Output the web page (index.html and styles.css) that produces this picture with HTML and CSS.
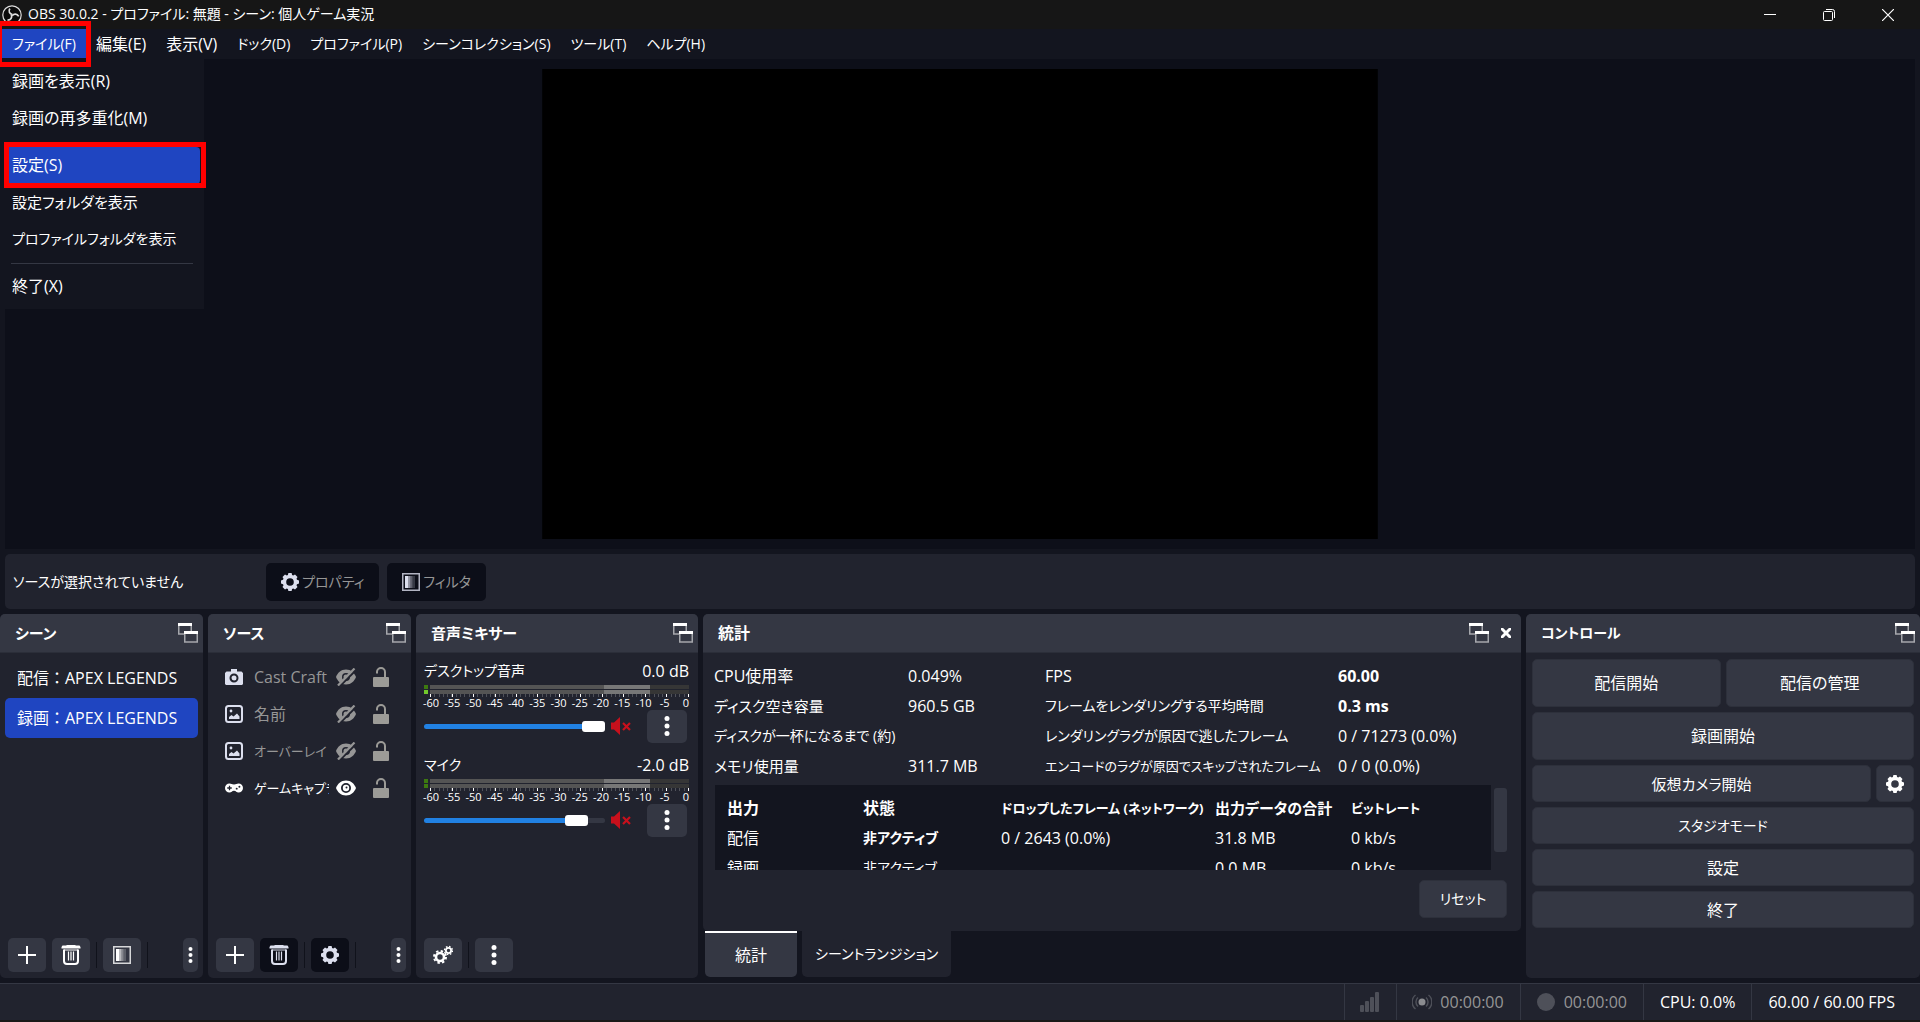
FILE: index.html
```html
<!DOCTYPE html>
<html lang="ja">
<head>
<meta charset="utf-8">
<title>OBS 30.0.2 - プロファイル: 無題 - シーン: 個人ゲーム実況</title>
<link rel="stylesheet" href="styles.css">
</head>
<body>
<svg class="sprite" aria-hidden="true">
  <symbol id="gear" viewBox="0 0 18 18"><path fill="currentColor" fill-rule="evenodd" d="M7.4 0h3.2l.5 1.9 1.1.5 1.8-1 2.5 2.5-1 1.8.5 1.1 2 .6v3.2l-2 .6-.5 1.1 1 1.8-2.5 2.5-1.8-1-1.1.5-.5 1.9H7.4l-.5-1.9-1.1-.5-1.8 1-2.5-2.5 1-1.8-.5-1.1-2-.6V7.400l2-.6.5-1.1-1-1.800 2.500-2.500 1.800 1 1.100-.5zM9 5.200a3.800 3.800 0 1 0 0 7.600 3.800 3.800 0 0 0 0-7.600z"/></symbol>
  <symbol id="gears" viewBox="0 0 20 18"><g fill="none" stroke="currentColor"><circle cx="7" cy="11" r="4" stroke-width="2.600"/><circle cx="7" cy="11" r="6" stroke-width="2" stroke-dasharray="2.400 2.312"/><circle cx="15.500" cy="4.500" r="2.600" stroke-width="1.800"/><circle cx="15.500" cy="4.500" r="4" stroke-width="1.400" stroke-dasharray="1.600 1.542"/></g></symbol>
  <symbol id="filter" viewBox="0 0 18 18"><path fill="none" stroke="currentColor" stroke-width="1.500" opacity=".8" d="M.75.75h16.500v16.500H.75z"/><path fill="currentColor" d="M3 3h3.500v12H3z"/><path fill="currentColor" opacity=".65" d="M6.500 3h2v12h-2z"/><path fill="currentColor" opacity=".4" d="M8.500 3h2v12h-2z"/><path fill="currentColor" opacity=".2" d="M10.500 3h2.500v12h-2.500z"/></symbol>
  <symbol id="popout" viewBox="0 0 20 20"><path fill="none" stroke="#a5a7ac" stroke-width="1.500" d="M7 11H.75V1.500h12.500V8M6.750 9h12.500v10H6.750z"/><path fill="#fff" d="M0 0h14v3H0zM6 8h14v3H6z"/></symbol>
  <symbol id="plus" viewBox="0 0 18 18"><path stroke="currentColor" stroke-width="2" d="M9 0v18M0 9h18"/></symbol>
  <symbol id="trash" viewBox="0 0 20 20"><path fill="currentColor" d="M5 .5 6 0h8l1 .5h3.500L19.500 2v1.500H.5V2l1-1.500z"/><path fill="none" stroke="currentColor" stroke-width="2" d="M3 4.500V16a3 3 0 0 0 3 3h8a3 3 0 0 0 3-3V4.500"/><path stroke="currentColor" stroke-width="1.200" d="M3 5h14M7.500 6.500v9M10 6.500v9M12.500 6.500v9"/></symbol>
  <symbol id="dots" viewBox="0 0 6 20"><g fill="currentColor"><circle cx="3" cy="2.500" r="2.500"/><circle cx="3" cy="10" r="2.500"/><circle cx="3" cy="17.500" r="2.500"/></g></symbol>
  <symbol id="camera" viewBox="0 0 18 16"><path fill="currentColor" fill-rule="evenodd" d="M6 0h6v2.500h4.500L18 4v11l-1 1H1l-1-1V4l1.500-1.500H6zM9 4.500a4.500 4.500 0 1 0 0 9 4.500 4.500 0 0 0 0-9zm0 2a2.500 2.500 0 1 1 0 5 2.500 2.500 0 0 1 0-5z"/></symbol>
  <symbol id="image" viewBox="0 0 18 18"><rect x="1" y="1" width="16" height="16" rx="2.500" fill="none" stroke="currentColor" stroke-width="2"/><path fill="currentColor" d="M4 14v-2l2.500-2 2 1.500L12 8.500l2.500 3V14z"/><circle cx="6" cy="6" r="1.400" fill="currentColor"/></symbol>
  <symbol id="pad" viewBox="0 0 20 10"><path fill="currentColor" fill-rule="evenodd" d="M5 0c2 0 2.500 1 5 1s3-1 5-1a5 5 0 0 1 0 10c-2.500 0-2.500-2-5-2s-2.500 2-5 2A5 5 0 0 1 5 0zM4.300 2.500v1.800H2.500v1.400h1.800v1.800h1.400V5.700h1.800V4.300H5.700V2.500zM13 4.600a1.100 1.100 0 1 0 0 2.200 1.100 1.100 0 0 0 0-2.200zm3-2.100a1.100 1.100 0 1 0 0 2.200 1.100 1.100 0 0 0 0-2.200z"/></symbol>
  <symbol id="eye" viewBox="0 0 20 16"><path fill="currentColor" fill-rule="evenodd" d="M10 .5C15 .5 18.500 4 20 8c-1.500 4-5 7.500-10 7.500S1.500 12 0 8C1.500 4 5 .5 10 .5zM10 3a5 5 0 1 0 0 10 5 5 0 0 0 0-10z"/><circle cx="10" cy="8" r="3.200" fill="currentColor"/><circle cx="10.500" cy="7.500" r="1" fill="#21232e"/></symbol>
  <symbol id="eye-off" viewBox="0 0 20 18"><path fill="currentColor" fill-rule="evenodd" d="M10 1.500C15 1.500 18.500 5 20 9c-1.500 4-5 7.500-10 7.500S1.500 13 0 9c1.500-4 5-7.500 10-7.500zM10 5a4 4 0 1 0 0 8 4 4 0 0 0 0-8z"/><circle cx="10" cy="9" r="2.500" fill="currentColor"/><path stroke="#21232e" stroke-width="2" d="M3.500 18.500 20 2"/><path stroke="currentColor" stroke-width="2.200" d="M2 17.500 18.500.5"/></symbol>
  <symbol id="lock" viewBox="0 0 16 20"><rect y="10" width="16" height="10" rx="1" fill="currentColor"/><path fill="none" stroke="currentColor" stroke-width="2" d="M12 10V5a4 4 0 0 0-8 0v1.500"/></symbol>
  <symbol id="mute" viewBox="0 0 20 18"><path fill="currentColor" d="M0 5.500h3L9 0v18l-6-5.500H0z"/><path stroke="currentColor" stroke-width="2.200" d="m12 6 7 7M19 6l-7 7"/></symbol>
</svg>

<header class="titlebar">
  <svg class="logo" viewBox="0 0 20 20" fill="none" stroke="#ddd"><circle cx="10" cy="10" r="9.200" fill="#0a0a0a" stroke-width="1.200"/><g stroke-width="1.700"><path d="M10.500 9.500C7.500 9 6.200 6.500 7.800 3.500"/><path d="M10.500 9.500C7.500 9 6.200 6.500 7.800 3.500" transform="rotate(120 10 10)"/><path d="M10.500 9.500C7.500 9 6.200 6.500 7.800 3.500" transform="rotate(240 10 10)"/></g></svg>
  <h1 class="title">OBS 30.0.2 - プロファイル: 無題 - シーン: 個人ゲーム実況</h1>
  <div class="window-buttons">
    <button aria-label="最小化"><svg width="12" height="12"><path stroke="#fff" d="M0 5.500h12"/></svg></button>
    <button aria-label="元に戻す"><svg width="12" height="12" fill="none" stroke="#fff"><rect x=".5" y="2.500" width="9" height="9" rx="1"/><path d="M3 .5h6.500a2 2 0 0 1 2 2V9"/></svg></button>
    <button aria-label="閉じる"><svg width="12" height="12"><path stroke="#fff" stroke-width="1.200" d="m0 0 12 12M12 0 0 12"/></svg></button>
  </div>
</header>

<nav class="menubar">
  <div class="menu-root">
    <button class="menu kana open">ファイル(F)</button>
    <div class="popup">
      <button>録画を表示(R)</button>
      <button>録画の再多重化(M)</button>
      <hr>
      <button class="current">設定(S)</button>
      <button class="mixed">設定フォルダを表示</button>
      <button class="kana">プロファイルフォルダを表示</button>
      <hr>
      <button>終了(X)</button>
    </div>
  </div>
  <button class="menu">編集(E)</button>
  <button class="menu">表示(V)</button>
  <button class="menu kana">ドック(D)</button>
  <button class="menu kana">プロファイル(P)</button>
  <button class="menu kana">シーンコレクション(S)</button>
  <button class="menu kana">ツール(T)</button>
  <button class="menu kana">ヘルプ(H)</button>
</nav>

<main class="workspace">
  <section class="preview">
    <svg class="output" viewBox="0 0 1920 1080" role="img" aria-label="プレビュー"><rect width="1920" height="1080" fill="#000"/></svg>
  </section>

  <section class="context">
    <span class="context-label kana">ソースが選択されていません</span>
    <button class="off kana" disabled><svg class="i18"><use href="#gear"/></svg>プロパティ</button>
    <button class="off kana" disabled><svg class="i18"><use href="#filter"/></svg>フィルタ</button>
  </section>

  <div class="docks">
    <section class="dock">
      <h2 class="mixed">シーン<button class="plain" aria-label="切り離す"><svg class="i20"><use href="#popout"/></svg></button></h2>
      <ul class="scenes">
        <li>配信：APEX LEGENDS</li>
        <li class="selected">録画：APEX LEGENDS</li>
      </ul>
      <div class="tools">
        <button class="tool" aria-label="追加"><svg class="i18"><use href="#plus"/></svg></button>
        <button class="tool" aria-label="削除"><svg class="i20"><use href="#trash"/></svg></button>
        <i></i>
        <button class="tool" aria-label="フィルタ"><svg class="i18"><use href="#filter"/></svg></button>
        <i></i>
        <button class="tool slim" aria-label="その他"><svg class="dots-s"><use href="#dots"/></svg></button>
      </div>
    </section>

    <section class="dock">
      <h2 class="mixed">ソース<button class="plain" aria-label="切り離す"><svg class="i20"><use href="#popout"/></svg></button></h2>
      <ul class="sources">
        <li class="hidden"><svg class="kind"><use href="#camera"/></svg><span>Cast Craft</span><svg class="eye"><use href="#eye-off"/></svg><svg class="lock"><use href="#lock"/></svg></li>
        <li class="hidden"><svg class="kind"><use href="#image"/></svg><span>名前</span><svg class="eye"><use href="#eye-off"/></svg><svg class="lock"><use href="#lock"/></svg></li>
        <li class="hidden"><svg class="kind"><use href="#image"/></svg><span class="dense">オーバーレイ</span><svg class="eye"><use href="#eye-off"/></svg><svg class="lock"><use href="#lock"/></svg></li>
        <li><svg class="kind"><use href="#pad"/></svg><span class="dense">ゲームキャプチャ</span><svg class="eye"><use href="#eye"/></svg><svg class="lock"><use href="#lock"/></svg></li>
      </ul>
      <div class="tools">
        <button class="tool" aria-label="追加"><svg class="i18"><use href="#plus"/></svg></button>
        <button class="tool off" disabled aria-label="削除"><svg class="i20"><use href="#trash"/></svg></button>
        <i></i>
        <button class="tool off" disabled aria-label="プロパティ"><svg class="i18"><use href="#gear"/></svg></button>
        <i></i>
        <button class="tool slim" aria-label="その他"><svg class="dots-s"><use href="#dots"/></svg></button>
      </div>
    </section>

    <section class="dock">
      <h2 class="mixed">音声ミキサー<button class="plain" aria-label="切り離す"><svg class="i20"><use href="#popout"/></svg></button></h2>
      <div class="mixer">
        <div class="channel">
          <div class="channel-head"><label class="kana" for="desk">デスクトップ音声</label><span>0.0 dB</span></div>
          <div class="meter"><b></b><div></div><b class="lit"></b><div></div></div>
          <div class="ticks"></div>
          <div class="scale"><span>-60</span><span>-55</span><span>-50</span><span>-45</span><span>-40</span><span>-35</span><span>-30</span><span>-25</span><span>-20</span><span>-15</span><span>-10</span><span>-5</span><span>0</span></div>
          <div class="volume"><input id="desk" type="range" min="0" max="100" value="100" style="--level:100%"><button class="plain" aria-label="ミュート"><svg class="mute"><use href="#mute"/></svg></button><button class="tool" aria-label="その他"><svg class="dots-l"><use href="#dots"/></svg></button></div>
        </div>
        <div class="channel">
          <div class="channel-head"><label class="kana" for="mic">マイク</label><span>-2.0 dB</span></div>
          <div class="meter"><b></b><div></div><b></b><div></div></div>
          <div class="ticks"></div>
          <div class="scale"><span>-60</span><span>-55</span><span>-50</span><span>-45</span><span>-40</span><span>-35</span><span>-30</span><span>-25</span><span>-20</span><span>-15</span><span>-10</span><span>-5</span><span>0</span></div>
          <div class="volume"><input id="mic" type="range" min="0" max="100" value="89" style="--level:85%"><button class="plain" aria-label="ミュート"><svg class="mute"><use href="#mute"/></svg></button><button class="tool" aria-label="その他"><svg class="dots-l"><use href="#dots"/></svg></button></div>
        </div>
      </div>
      <div class="tools">
        <button class="tool" aria-label="オーディオの詳細プロパティ"><svg class="i20"><use href="#gears"/></svg></button>
        <i></i>
        <button class="tool" aria-label="その他"><svg class="dots-l"><use href="#dots"/></svg></button>
      </div>
    </section>

    <div class="tabbed">
      <section class="dock">
        <h2>統計<button class="plain" aria-label="切り離す"><svg class="i20"><use href="#popout"/></svg></button><button class="plain close" aria-label="閉じる"><svg width="10" height="10"><path stroke="#fff" stroke-width="3" d="m0 0 10 10M10 0 0 10"/></svg></button></h2>
        <div class="stats">
          <dl>
            <dt>CPU使用率</dt><dd>0.049%</dd><dt>FPS</dt><dd><b>60.00</b></dd>
            <dt class="mixed">ディスク空き容量</dt><dd>960.5 GB</dd><dt class="kana">フレームをレンダリングする平均時間</dt><dd><b>0.3 ms</b></dd>
            <dt class="kana">ディスクが一杯になるまで (約)</dt><dd></dd><dt class="kana">レンダリングラグが原因で逃したフレーム</dt><dd>0 / 71273 (0.0%)</dd>
            <dt class="mixed">メモリ使用量</dt><dd>311.7 MB</dd><dt class="dense">エンコードのラグが原因でスキップされたフレーム</dt><dd>0 / 0 (0.0%)</dd>
          </dl>
          <div class="outputs">
            <div class="outputs-view">
              <table>
                <colgroup><col class="c1"><col class="c2"><col class="c3"><col class="c4"><col></colgroup>
                <thead><tr><th>出力</th><th>状態</th><th class="dense">ドロップしたフレーム (ネットワーク)</th><th class="mixed">出力データの合計</th><th class="dense">ビットレート</th></tr></thead>
                <tbody>
                  <tr><td>配信</td><td class="kana"><b>非アクティブ</b></td><td>0 / 2643 (0.0%)</td><td>31.8 MB</td><td>0 kb/s</td></tr>
                  <tr><td>録画</td><td class="kana">非アクティブ</td><td></td><td>0.0 MB</td><td>0 kb/s</td></tr>
                </tbody>
              </table>
            </div>
            <div class="scroll"></div>
          </div>
          <button class="push kana reset">リセット</button>
        </div>
      </section>
      <div class="tabs">
        <button class="tab active">統計</button>
        <button class="tab kana">シーントランジション</button>
      </div>
    </div>

    <section class="dock">
      <h2 class="kana">コントロール<button class="plain" aria-label="切り離す"><svg class="i20"><use href="#popout"/></svg></button></h2>
      <div class="controls">
        <div class="pair"><button class="push tall">配信開始</button><button class="push tall">配信の管理</button></div>
        <button class="push tall">録画開始</button>
        <div class="pair"><button class="push mixed">仮想カメラ開始</button><button class="push square" aria-label="仮想カメラの設定"><svg class="i18"><use href="#gear"/></svg></button></div>
        <button class="push kana">スタジオモード</button>
        <button class="push">設定</button>
        <button class="push">終了</button>
      </div>
    </section>
  </div>
</main>

<footer class="status">
  <div class="signal"><svg width="20" height="20" fill="#4e5059"><rect y="13" width="4" height="7" rx="1"/><rect x="5" y="9" width="4" height="11" rx="1"/><rect x="10" y="5" width="4" height="15" rx="1"/><rect x="15" width="4" height="20" rx="1"/></svg></div>
  <div class="dim"><svg width="20" height="20" fill="none" stroke="#4e5059" stroke-width="1.500"><circle cx="10" cy="10" r="3.500" fill="#8b8c90" stroke="none"/><path d="M6 5.500a6 6 0 0 0 0 9M14 5.500a6 6 0 0 1 0 9M3.500 3a9 9 0 0 0 0 14M16.500 3a9 9 0 0 1 0 14"/></svg>00:00:00</div>
  <div class="dim"><svg width="20" height="20"><circle cx="10" cy="10" r="9" fill="#4e5059"/></svg>00:00:00</div>
  <div>CPU: 0.0%</div>
  <div class="fps">60.00 / 60.00 FPS</div>
</footer>
</body>
</html>
```
FILE: styles.css
```css
:root {
  --window: #13151f;
  --panel: #21232e;
  --raised: #343743;
  --sunken: #0c0e18;
  --accent: #1f45c1;
  --callout: #ff0000;
  --muted: #969696;
}

* { box-sizing: border-box; }

body {
  margin: 0;
  min-height: 100vh;
  display: flex;
  flex-direction: column;
  background: var(--window);
  color: #fff;
  font: 16px/24px "Open Sans", "Noto Sans CJK JP", sans-serif;
  font-feature-settings: "palt";
  white-space: nowrap;
}

button {
  font: inherit;
  font-feature-settings: inherit;
  color: inherit;
  border: 0;
  padding: 0;
  background: none;
}

h1, h2, ul, dl, dd { margin: 0; padding: 0; }
h2 { font-size: 16px; font-weight: 700; }
ul { list-style: none; }
svg { display: block; flex: none; }

.mixed { font-size: 15px; }
.kana { font-size: 14px; }
.dense { font-size: 13px; }

.sprite { position: absolute; width: 0; height: 0; }
.i18 { width: 18px; height: 18px; }
.i20 { width: 20px; height: 20px; }
.dots-s { width: 5px; height: 16px; }
.dots-l { width: 6px; height: 20px; }

/* Title bar */
.titlebar {
  display: flex;
  align-items: center;
  height: 29px;
  padding: 0 3px 0 2px;
  background: #161616;
}
.logo { width: 20px; height: 20px; }
.title { margin-left: 6px; padding-bottom: 2px; font-size: 14px; font-weight: 400; }
.window-buttons { display: flex; margin-left: auto; }
.window-buttons button { width: 59px; height: 29px; display: grid; place-items: center; }

/* Menu bar */
.menubar { display: flex; height: 30px; padding-left: 2px; }
.menu-root { position: relative; }
.menu { height: 29px; padding: 0 10px; }
.menu.open { background: var(--accent); }
.menu.open::after {
  content: "";
  position: absolute;
  z-index: 3;
  inset: -8px -5px -8px -5px;
  border: 5px solid var(--callout);
}
.popup {
  position: absolute;
  z-index: 2;
  top: 30px;
  left: -2px;
  width: 204px;
  padding: 4px;
  display: flex;
  flex-direction: column;
  background: var(--window);
}
.popup button { height: 37px; padding: 0 0 2px 8px; text-align: left; }
.popup hr { width: 182px; height: 1px; margin: 5px 7px 4px; border: 0; background: var(--raised); }
.popup .current { position: relative; background: var(--accent); border-radius: 4px; }
.popup .current::after {
  content: "";
  position: absolute;
  inset: -5px -6px -4px 0;
  border: 5px solid var(--callout);
}

/* Preview and context bar */
.workspace { flex: 1; display: flex; flex-direction: column; }
.preview {
  flex: 1 1 0;
  min-height: 200px;
  margin: 0 5px;
  padding: 10px;
  display: flex;
  background: #0d0f19;
}
.output { flex: 1; min-width: 0; min-height: 0; }
.context {
  display: flex;
  align-items: center;
  gap: 8px;
  height: 55px;
  margin: 5px;
  padding-left: 8px;
  border-radius: 5px;
  background: var(--panel);
}
.context-label { width: 245px; }
.off { background: var(--sunken); color: #dcdfee; }
.context .off {
  display: flex;
  align-items: center;
  gap: 3px;
  height: 38px;
  padding: 0 15px;
  border-radius: 5px;
  color: var(--muted);
}
.off svg { color: #dcdfee; }

/* Docks */
.docks {
  display: grid;
  grid-template-columns: 203fr 203fr 282fr 818fr 394fr;
  gap: 5px;
  height: 364px;
}
.dock {
  min-width: 0;
  display: flex;
  flex-direction: column;
  border-radius: 5px;
  background: var(--panel);
  overflow: hidden;
}
.dock h2 {
  display: flex;
  align-items: center;
  height: 39px;
  padding: 0 5px 0 15px;
  border-bottom: 1px solid #2b2e39;
  background: var(--raised);
}
h2.mixed { font-size: 15px; }
h2.kana { font-size: 14px; }
.dock h2 .plain { margin-left: auto; }
.dock h2 .close { margin: 0 5px 0 12px; }

.scenes { padding: 5px; font-feature-settings: normal; }
.scenes li { height: 40px; padding: 8px 12px; border-radius: 5px; }
.scenes .selected { background: var(--accent); }

.sources { padding: 5px 22px 0 17px; }
.sources li { display: flex; align-items: center; height: 37px; }
.sources .hidden { color: var(--muted); }
.sources span { flex: 1; min-width: 0; margin: 0 7px 0 11px; overflow: hidden; }
.kind { width: 18px; height: 18px; color: #fff; }
.hidden .kind { color: #dcdfee; }
.eye { width: 20px; height: 18px; }
.lock { width: 16px; height: 20px; margin-left: 17px; color: #9c9b97; }

.tools { display: flex; align-items: center; gap: 6px; margin: auto 5px 6px 8px; }
.tools i { width: 1px; height: 26px; background: #10121b; }
.tool {
  width: 38px;
  height: 34px;
  display: grid;
  place-items: center;
  border-radius: 5px;
  background: var(--raised);
}
.tool.off { background: var(--sunken); }
.tool.slim { width: 15px; margin-left: auto; }

/* Audio mixer */
.mixer { padding: 6px 9px 0 8px; }
.channel { height: 94px; }
.channel-head { display: flex; justify-content: space-between; }
.meter {
  display: grid;
  grid-template-columns: 4px 1fr;
  gap: 1px 2px;
  margin-top: 2px;
}
.meter b { height: 4px; background: #3d7a10; }
.meter .lit { background: #72c92c; }
.meter div { background: linear-gradient(90deg, #545454 67%, #777 67% 85%, #363636 85%); }
.ticks {
  height: 3px;
  margin: 0 0 0 6px;
  background:
    repeating-linear-gradient(90deg, #fff 0 1px, transparent 1px calc((100% - 1px) / 12)),
    repeating-linear-gradient(90deg, #50525a 0 1px, transparent 1px calc((100% - 1px) / 60));
}
.scale {
  display: flex;
  justify-content: space-between;
  margin: 0 3px 0 7px;
  font-size: 11px;
  line-height: 12px;
}
.scale span { width: 0; display: flex; justify-content: center; }
.volume { display: flex; align-items: center; height: 34px; }
.volume input {
  appearance: none;
  flex: 1;
  min-width: 0;
  height: 12px;
  margin: 0 6px 0 0;
  background: none;
}
.volume input::-webkit-slider-runnable-track {
  height: 5px;
  border-radius: 3px;
  background: linear-gradient(90deg, #2181e3 var(--level), var(--raised) var(--level));
}
.volume input::-webkit-slider-thumb {
  appearance: none;
  width: 23px;
  height: 11px;
  margin-top: -3px;
  border-radius: 3px;
  background: #fff;
}
.mute { width: 20px; height: 18px; color: #c8101c; }
.volume .tool { width: 40px; height: 33px; margin: 0 2px 0 16px; }

/* Statistics */
.tabbed { min-width: 0; display: flex; flex-direction: column; }
.stats { display: flex; flex-direction: column; padding: 8px 14px 13px 11px; }
.stats dl {
  display: grid;
  grid-template-columns: 194px 137px 293px 1fr;
  line-height: 30px;
}
.outputs { display: flex; gap: 3px; height: 85px; margin: 4px 0 10px 1px; }
.outputs-view { flex: 1; min-width: 0; overflow: hidden; background: var(--window); }
.outputs table { width: 100%; table-layout: fixed; border-collapse: collapse; line-height: 30px; margin: 8px 0 0 12px; }
.outputs th, .outputs td { padding: 0; text-align: left; }
.c1 { width: 136px; }
.c2 { width: 138px; }
.c3 { width: 214px; }
.c4 { width: 136px; }
.scroll { width: 13px; height: 64px; margin-top: 3px; border-radius: 3px; background: var(--raised); }
.push {
  height: 37px;
  border-radius: 5px;
  border: 1px solid #2d303b;
  background: var(--raised);
}
.reset { align-self: flex-end; width: 88px; height: 38px; }

.tabs { display: flex; gap: 5px; padding-left: 2px; }
.tab { height: 46px; padding: 0 13px; border-radius: 0 0 5px 5px; background: var(--panel); }
.tab.active { padding: 0 30px; border-top: 2px solid #fff; background: var(--raised); }

/* Controls */
.controls { display: flex; flex-direction: column; gap: 5px; padding: 6px; }
.pair { display: flex; gap: 5px; }
.pair .push { flex: 1; }
.controls .tall { height: 48px; }
.pair .square { flex: none; width: 38px; display: grid; place-items: center; }

/* Status bar */
.status {
  display: flex;
  justify-content: flex-end;
  height: 39px;
  margin-top: 5px;
  border-top: 1px solid var(--raised);
  border-bottom: 2px solid #191918;
  background: var(--panel);
}
.status div {
  display: flex;
  align-items: center;
  gap: 8px;
  padding: 0 16px;
  border-left: 1px solid var(--raised);
}
.status .signal { padding: 0 16px 0 15px; }
.status .dim { padding: 0 16px 0 15px; color: var(--muted); }
.status .fps { padding-right: 25px; }
```
